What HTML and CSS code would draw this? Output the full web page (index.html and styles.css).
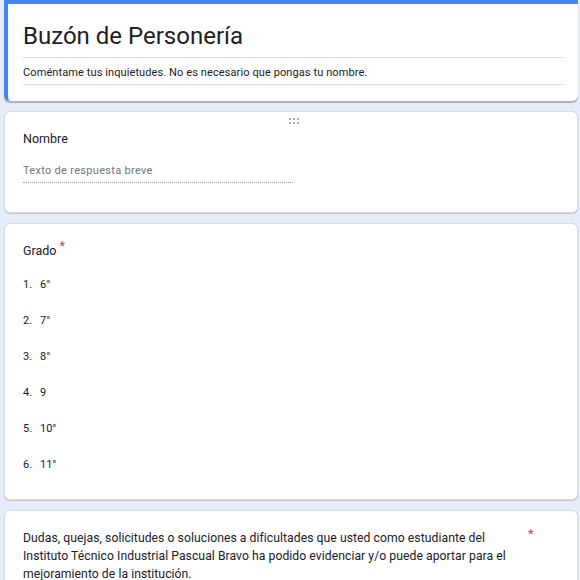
FILE: index.html
```html
<!DOCTYPE html>
<html lang="es">
<head>
<meta charset="utf-8">
<link rel="stylesheet" href="styles.css">
</head>
<body>
<div class="page">
  <section class="card header">
    <h1 class="title">Buzón de Personería</h1>
    <p class="desc">Coméntame tus inquietudes. No es necesario que pongas tu nombre.</p>
  </section>

  <section class="card q q-name">
    <div class="handle">
      <svg width="10" height="6" viewBox="0 0 10 6"><g fill="#b0b0b0"><rect x="0" y="0" width="2" height="2"/><rect x="4" y="0" width="2" height="2"/><rect x="8" y="0" width="2" height="2"/><rect x="0" y="4" width="2" height="2"/><rect x="4" y="4" width="2" height="2"/><rect x="8" y="4" width="2" height="2"/></g></svg>
    </div>
    <div class="q-title">Nombre</div>
    <div class="short">Texto de respuesta breve</div>
  </section>

  <section class="card q q-grado">
    <div class="q-title">Grado<span class="req">*</span></div>
    <ol class="opts">
      <li><span class="num">1.</span>6°</li>
      <li><span class="num">2.</span>7°</li>
      <li><span class="num">3.</span>8°</li>
      <li><span class="num">4.</span>9</li>
      <li><span class="num">5.</span>10°</li>
      <li><span class="num">6.</span>11°</li>
    </ol>
  </section>

  <section class="card q q-long">
    <div class="long-row">
      <div class="long-text">Dudas, quejas, solicitudes o soluciones a dificultades que usted como estudiante del Instituto Técnico Industrial Pascual Bravo ha podido evidenciar y/o puede aportar para el mejoramiento de la institución.</div>
      <span class="req req-side">*</span>
    </div>
  </section>
</div>
</body>
</html>
```

FILE: styles.css
```css
html, body {
  margin: 0;
  padding: 0;
  background: #e5edfa;
  font-family: Roboto, "Liberation Sans", Arial, sans-serif;
  color: #202124;
  overflow: hidden;
}

.page {
  display: flex;
  flex-direction: column;
  gap: 10px;
  padding-left: 4px;
  width: 574px;
}

.card {
  background: #fff;
  border-radius: 6px;
  box-shadow: 0 1px 1px rgba(60, 64, 67, 0.25);
  border: 1px solid #dadce0;
  box-sizing: border-box;
}

.header {
  border: none;
  border-top: 4px solid #4285f4;
  border-left: 4px solid #4285f4;
  border-radius: 0 0 6px 6px;
  height: 101px;
  padding: 16px 15px 0 15px;
  box-shadow: 0 2px 1px rgba(60, 64, 67, 0.35);
}

.title {
  margin: 0;
  font-size: 24px;
  font-weight: 400;
  line-height: 32px;
  padding-bottom: 5px;
  border-bottom: 1px solid #dadce0;
  letter-spacing: 0;
}

.desc {
  margin: 0;
  font-size: 11px;
  line-height: 14px;
  padding: 8px 0 4px 0;
  border-bottom: 1px solid #dadce0;
  letter-spacing: 0.1px;
}

.q {
  padding: 0 18px;
  position: relative;
}

.q-name {
  height: 102px;
  padding-top: 18px;
}

.handle {
  position: absolute;
  top: 6px;
  left: 284px;
  line-height: 0;
}

.q-title {
  font-size: 12.5px;
  line-height: 18px;
}

.short {
  margin-top: 15px;
  width: 270px;
  font-size: 11px;
  color: #70757a;
  line-height: 16px;
  padding-bottom: 3px;
  border-bottom: 1px dotted #9aa0a6;
  letter-spacing: 0.3px;
}

.q-grado {
  height: 277px;
  padding-top: 18px;
}

.req {
  color: #c5483f;
  font-size: 13px;
  margin-left: 3px;
  position: relative;
  top: -5px;
  line-height: 0;
}

.opts {
  list-style: none;
  margin: 17px 0 0 0;
  padding: 0;
  display: flex;
  flex-direction: column;
  gap: 20px;
  font-size: 11px;
  line-height: 16px;
}

.num {
  display: inline-block;
  width: 17px;
}

.q-long {
  padding-top: 18px;
  height: 100px;
}

.long-row {
  display: flex;
}

.long-text {
  width: 500px;
  font-size: 12.2px;
  line-height: 18px;
  letter-spacing: 0.05px;
}

.req-side {
  margin-left: 5px;
  top: 5px;
}
```
